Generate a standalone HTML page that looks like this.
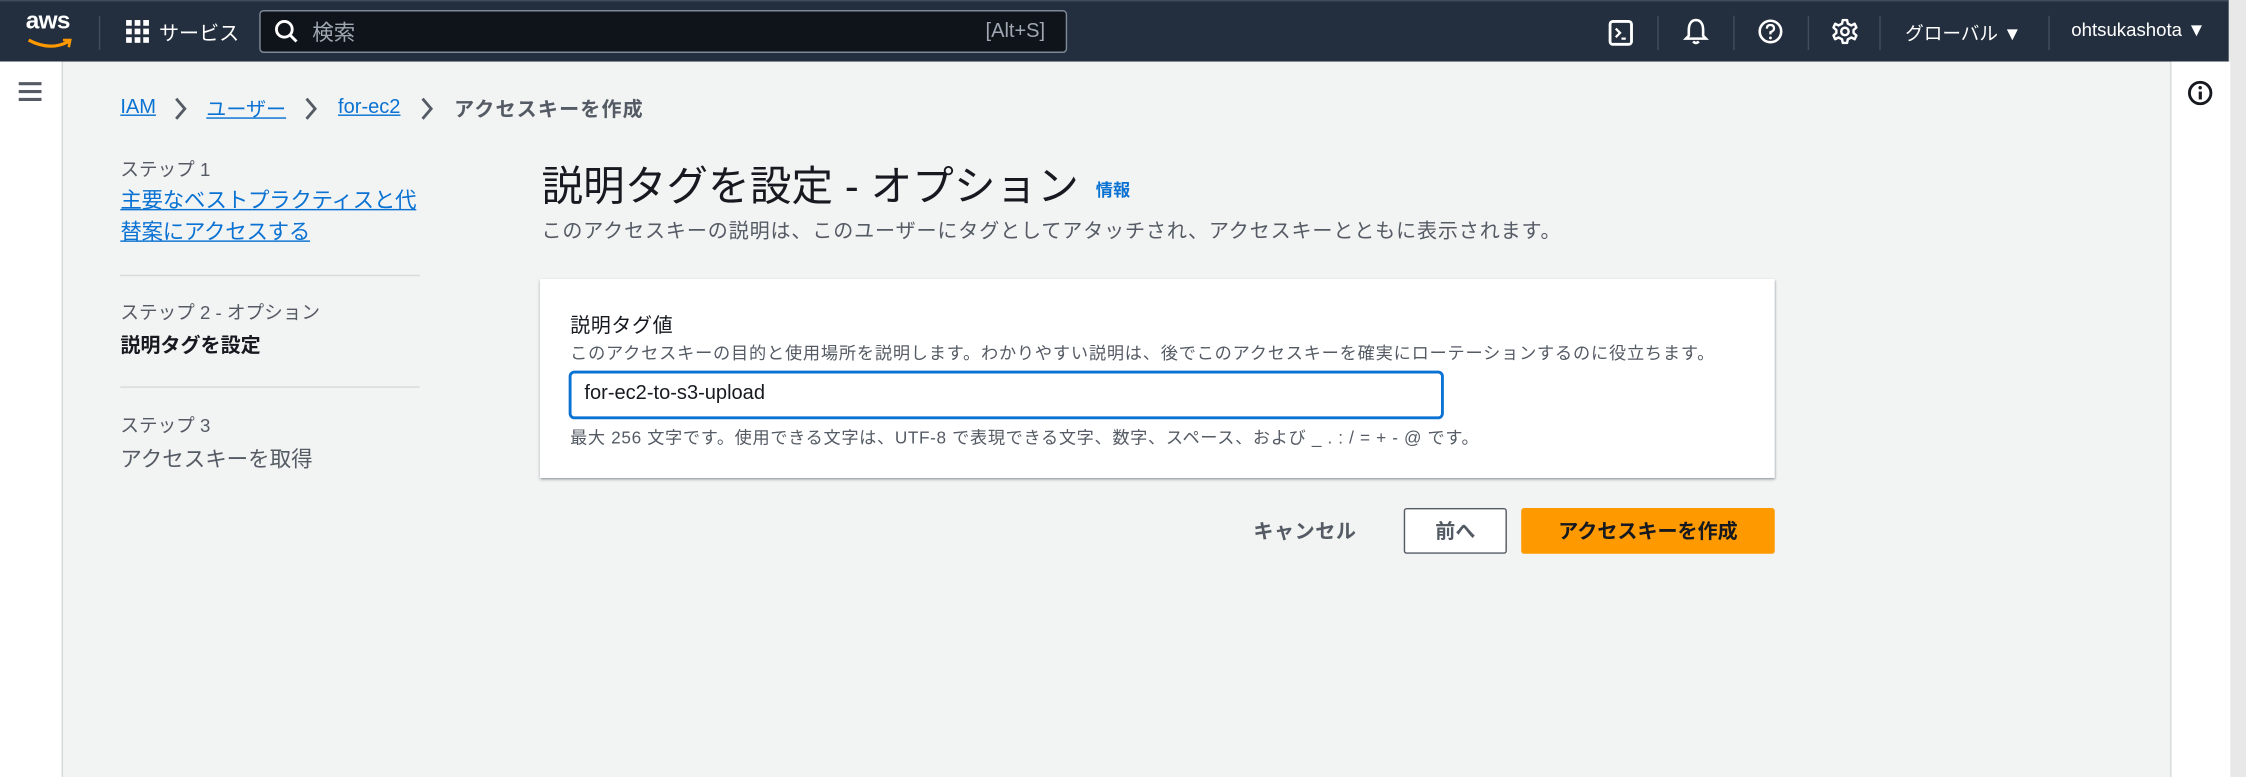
<!DOCTYPE html>
<html><head><meta charset="utf-8"><style>
html,body{margin:0;padding:0;width:2246px;height:777px;overflow:hidden;background:#f2f3f3}
#root{position:absolute;left:0;top:0;width:1568px;height:543px;transform:scale(1.43240,1.43100);transform-origin:0 0;background:#f2f3f3;font-family:"Liberation Sans","Noto Sans CJK JP",sans-serif;color:#16191f}
.a{position:absolute;white-space:nowrap}
#hdr{position:absolute;left:0;top:0;width:1556px;height:43px;background:#232f3e;border-top:1px solid #414d5c;box-sizing:border-box}
.dv{position:absolute;top:10px;width:1px;height:24px;background:#414d5c}
.w{color:#fff;font-size:14px}
a{color:#0972d3;text-decoration:underline}
.gray{color:#545b64}
.chev{position:absolute;top:68px}
</style></head><body><div id="root">
<div id="hdr">
 <div class="a" style="left:18px;top:4px;color:#fff;font-size:17px;font-weight:bold;letter-spacing:-0.5px">aws</div>
 <svg class="a" style="left:18px;top:25px" width="34" height="9"><path d="M2 2 Q17 10 30 3" stroke="#ff9900" stroke-width="2.2" fill="none"/><path d="M26 2 L31 2 L30 7" stroke="#ff9900" stroke-width="1.8" fill="none"/></svg>
 <div class="dv" style="left:69px"></div>
 <svg class="a" style="left:88px;top:13px" width="16" height="16"><g fill="#fff"><rect x="0" y="0" width="4" height="4"/><rect x="6" y="0" width="4" height="4"/><rect x="12" y="0" width="4" height="4"/><rect x="0" y="6" width="4" height="4"/><rect x="6" y="6" width="4" height="4"/><rect x="12" y="6" width="4" height="4"/><rect x="0" y="12" width="4" height="4"/><rect x="6" y="12" width="4" height="4"/><rect x="12" y="12" width="4" height="4"/></g></svg>
 <div class="a w" style="left:111px;top:12px">サービス</div>
 <div class="a" style="left:181px;top:6px;width:564px;height:30px;background:#0f141a;border:1px solid #7d8998;border-radius:3px;box-sizing:border-box"></div>
 <svg class="a" style="left:191px;top:12px" width="18" height="18"><circle cx="7.5" cy="7.5" r="5.5" stroke="#fff" stroke-width="2" fill="none"/><path d="M11.5 11.5 L16 16" stroke="#fff" stroke-width="2"/></svg>
 <div class="a" style="left:218px;top:11px;color:#a0a7b2;font-size:15px">検索</div>
 <div class="a" style="left:688px;top:12px;color:#a0a7b2;font-size:14px">[Alt+S]</div>
 <svg class="a" style="left:1123px;top:12px" width="18" height="20"><rect x="1" y="2" width="15" height="16" rx="2" stroke="#fff" stroke-width="2" fill="none"/><path d="M5 7 L8 10 L5 13 M9 14 H12" stroke="#fff" stroke-width="1.6" fill="none"/></svg>
 <div class="dv" style="left:1157px"></div>
 <svg class="a" style="left:1175px;top:11px" width="18" height="20"><path d="M9 2 C5 2 4 6 4 9 V13 L2 15 H16 L14 13 V9 C14 6 13 2 9 2Z M7 17 Q9 19 11 17" stroke="#fff" stroke-width="1.8" fill="none"/></svg>
 <div class="dv" style="left:1210px"></div>
 <svg class="a" style="left:1227px;top:12px" width="18" height="18"><circle cx="9" cy="9" r="7.5" stroke="#fff" stroke-width="1.8" fill="none"/><path d="M6.5 7 Q6.5 4.5 9 4.5 Q11.5 4.5 11.5 7 Q11.5 8.5 9 9.5 V11" stroke="#fff" stroke-width="1.6" fill="none"/><circle cx="9" cy="13.5" r="1" fill="#fff"/></svg>
 <div class="dv" style="left:1262px"></div>
 <svg class="a" style="left:1279px;top:12px" width="18" height="18"><path d="M7.5 1 H10.5 L11 3.5 L13.5 4.8 L15.8 3.6 L17 6.2 L15 8 V10 L17 11.8 L15.8 14.4 L13.5 13.2 L11 14.5 L10.5 17 H7.5 L7 14.5 L4.5 13.2 L2.2 14.4 L1 11.8 L3 10 V8 L1 6.2 L2.2 3.6 L4.5 4.8 L7 3.5 Z" stroke="#fff" stroke-width="1.7" fill="none" stroke-linejoin="round"/><circle cx="9" cy="9" r="2.6" stroke="#fff" stroke-width="1.7" fill="none"/></svg>
 <div class="dv" style="left:1312px"></div>
 <div class="a w" style="left:1330px;top:12px;font-size:13px">グローバル ▼</div>
 <div class="dv" style="left:1430px"></div>
 <div class="a w" style="left:1446px;top:12px;font-size:13px">ohtsukashota ▼</div>
</div>
<div class="a" style="left:1556px;top:0;width:12px;height:543px;background:#e8e8e8"></div>
<div class="a" style="left:0;top:43px;width:43px;height:500px;background:#fff;border-right:1px solid #d5dbdb"></div>
<svg class="a" style="left:13px;top:57px" width="16" height="14"><path d="M0 1.5H16M0 7H16M0 12.5H16" stroke="#545b64" stroke-width="2.2"/></svg>
<div class="a" style="left:1515px;top:43px;width:41px;height:500px;background:#fff;border-left:1px solid #d5dbdb"></div>
<svg class="a" style="left:1527px;top:56px" width="18" height="18"><circle cx="9" cy="9" r="7.5" stroke="#16191f" stroke-width="2" fill="none"/><rect x="8" y="8" width="2.2" height="5.5" fill="#16191f"/><circle cx="9" cy="5.3" r="1.2" fill="#16191f"/></svg>

<div class="a" style="left:84px;top:66px;font-size:14px"><a>IAM</a></div>
<svg class="chev" style="left:121px" width="10" height="16"><path d="M2 1 L8 8 L2 15" stroke="#545b64" stroke-width="2" fill="none"/></svg>
<div class="a" style="left:144px;top:66px;font-size:14px"><a>ユーザー</a></div>
<svg class="chev" style="left:212px" width="10" height="16"><path d="M2 1 L8 8 L2 15" stroke="#545b64" stroke-width="2" fill="none"/></svg>
<div class="a" style="left:236px;top:66px;font-size:14px"><a>for-ec2</a></div>
<svg class="chev" style="left:293px" width="10" height="16"><path d="M2 1 L8 8 L2 15" stroke="#545b64" stroke-width="2" fill="none"/></svg>
<div class="a gray" style="left:317px;top:66px;font-size:14px;font-weight:bold;letter-spacing:0.8px">アクセスキーを作成</div>

<div class="a gray" style="left:84px;top:108px;font-size:13px">ステップ 1</div>
<div class="a" style="left:84px;top:130px;font-size:15px;line-height:22px;letter-spacing:-0.2px"><a>主要なベストプラクティスと代<br>替案にアクセスする</a></div>
<div class="a" style="left:84px;top:192px;width:209px;height:1px;background:#d5dbdb"></div>
<div class="a gray" style="left:84px;top:208px;font-size:13px">ステップ 2 - オプション</div>
<div class="a" style="left:84px;top:231px;font-size:14px;font-weight:bold">説明タグを設定</div>
<div class="a" style="left:84px;top:270px;width:209px;height:1px;background:#d5dbdb"></div>
<div class="a gray" style="left:84px;top:287px;font-size:13px">ステップ 3</div>
<div class="a gray" style="left:84px;top:310px;font-size:15px">アクセスキーを取得</div>

<div class="a" style="left:378px;top:107px;font-size:29px;letter-spacing:0.1px">説明タグを設定 - オプション</div>
<div class="a" style="left:765px;top:124px;font-size:12px;font-weight:bold;color:#0972d3">情報</div>
<div class="a gray" style="left:378px;top:151px;font-size:14px;letter-spacing:0.6px">このアクセスキーの説明は、このユーザーにタグとしてアタッチされ、アクセスキーとともに表示されます。</div>

<div class="a" style="left:377px;top:195px;width:862px;height:139px;background:#fff;box-shadow:0 1px 2px rgba(0,28,36,.3),1px 1px 1px rgba(0,28,36,.15)"></div>
<div class="a" style="left:398px;top:217px;font-size:14px;letter-spacing:0.4px">説明タグ値</div>
<div class="a gray" style="left:398px;top:238px;font-size:12px;letter-spacing:0.55px">このアクセスキーの目的と使用場所を説明します。わかりやすい説明は、後でこのアクセスキーを確実にローテーションするのに役立ちます。</div>
<div class="a" style="left:397px;top:259px;width:611px;height:34px;border:2px solid #0972d3;border-radius:4px;box-sizing:border-box"></div>
<div class="a" style="left:408px;top:266px;font-size:14px">for-ec2-to-s3-upload</div>
<div class="a gray" style="left:398px;top:297px;font-size:12px;letter-spacing:0.45px">最大 256 文字です。使用できる文字は、UTF-8 で表現できる文字、数字、スペース、および _ . : / = + - @ です。</div>

<div class="a gray" style="left:875px;top:361px;font-size:14px;font-weight:bold;letter-spacing:0.4px">キャンセル</div>
<div class="a" style="left:980px;top:355px;width:72px;height:32px;border:1px solid #545b64;border-radius:2px;background:#fff;box-sizing:border-box;text-align:center;line-height:30px;font-size:14px;font-weight:bold;color:#545b64">前へ</div>
<div class="a" style="left:1062px;top:355px;width:177px;height:32px;border-radius:2px;background:#ff9900;text-align:center;line-height:32px;font-size:14px;font-weight:bold;color:#16191f">アクセスキーを作成</div>
</div></body></html>
